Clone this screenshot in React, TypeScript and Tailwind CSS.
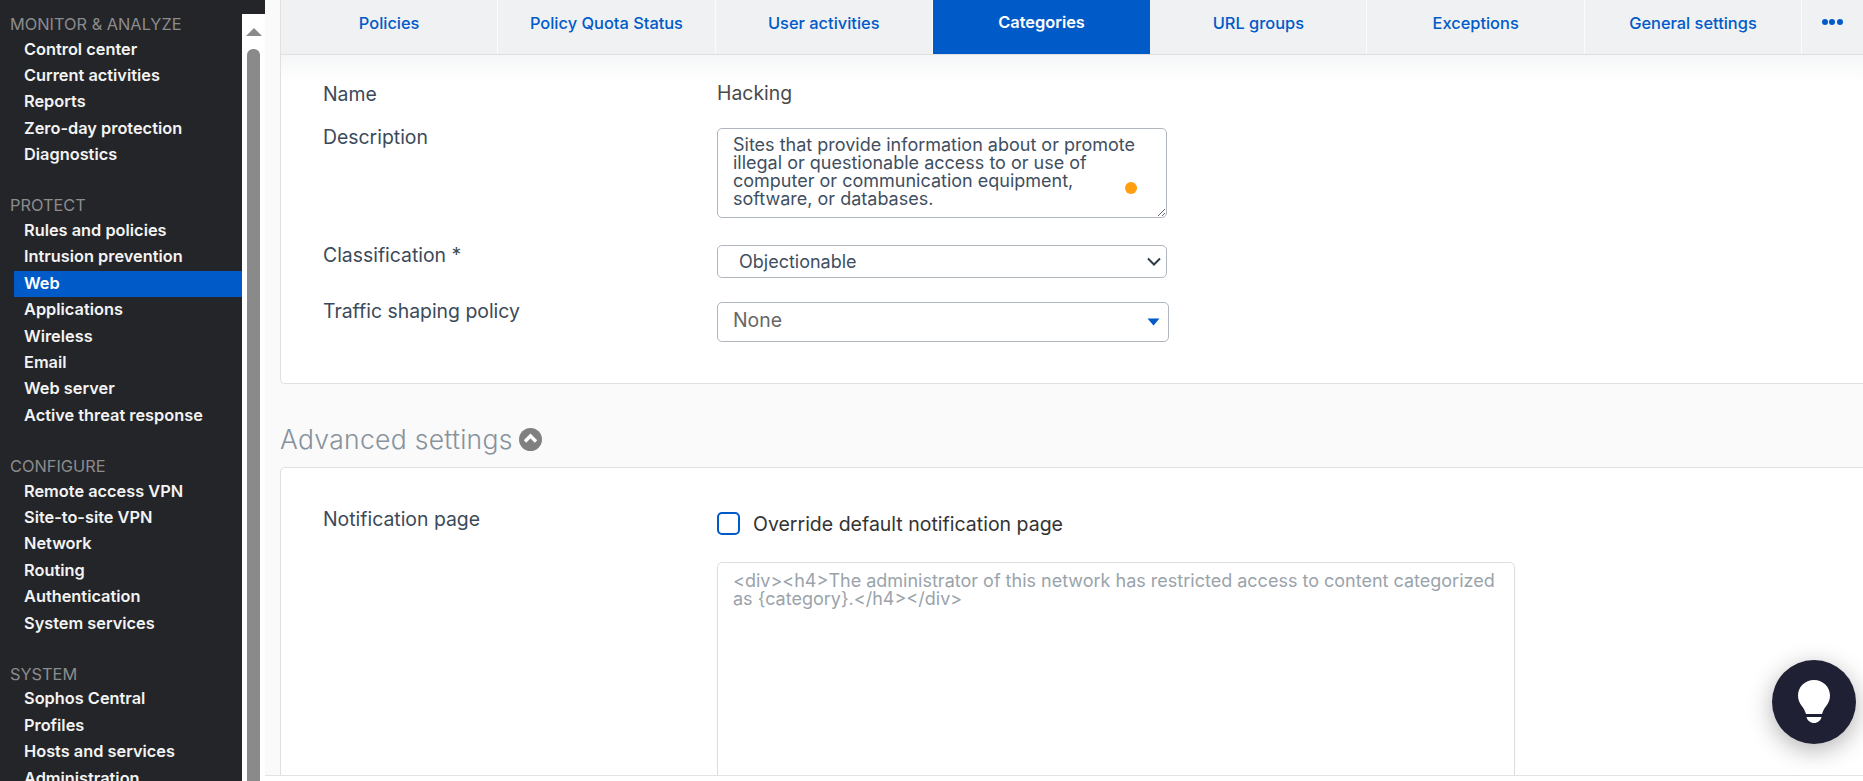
const SECTIONS = [
  { title: "MONITOR & ANALYZE", items: ["Control center", "Current activities", "Reports", "Zero-day protection", "Diagnostics"] },
  { title: "PROTECT", items: ["Rules and policies", "Intrusion prevention", "Web", "Applications", "Wireless", "Email", "Web server", "Active threat response"] },
  { title: "CONFIGURE", items: ["Remote access VPN", "Site-to-site VPN", "Network", "Routing", "Authentication", "System services"] },
  { title: "SYSTEM", items: ["Sophos Central", "Profiles", "Hosts and services", "Administration"] },
];

const TABS = ["Policies", "Policy Quota Status", "User activities", "Categories", "URL groups", "Exceptions", "General settings"];

const DESCRIPTION =
  "Sites that provide information about or promote illegal or questionable access to or use of computer or communication equipment, software, or databases.";

const NOTIFICATION = "<div><h4>The administrator of this network has restricted access to content categorized as {category}.</h4></div>";

function Sidebar() {
  return (
    <aside className="w-[265px] h-full shrink-0 flex bg-[#242528] overflow-hidden">
      <nav className="w-[242px] shrink-0 pt-[13px]">
        {SECTIONS.map((section) => (
          <div key={section.title} className="mb-[26px]">
            <h3 className="pl-[10px] h-[23.500px] leading-[23px] text-[16.35px] text-[#8b8c8e] font-normal whitespace-nowrap">{section.title}</h3>
            {section.items.map((item) => (
              <a
                key={item}
                href="#"
                className={`block ml-[14px] pl-[10px] h-[26.4px] leading-[25.500px] text-[16.35px] font-semibold whitespace-nowrap ${
                  item === "Web" ? "bg-[#005bc8] text-white" : "text-[#f3f3f3]"
                }`}
              >
                {item}
              </a>
            ))}
          </div>
        ))}
      </nav>
      {/* scrollbar */}
      <div className="w-[23px] mt-[14px] bg-white flex flex-col items-center">
        <div className="mt-[14px] w-0 h-0 border-x-[8px] border-x-transparent border-b-[8px] border-b-[#8a8a8a]" />
        <div className="mt-[13px] w-[13px] flex-1 rounded-t-[6px] bg-[#8a8a8a]" />
      </div>
    </aside>
  );
}

function Tabs() {
  return (
    <div className="flex h-[55px] shrink-0 ml-[15px] border-l border-b border-[#e0e0e0] bg-[#f0f1f3]">
      {TABS.map((tab) => (
        <a
          key={tab}
          href="#"
          className={`w-[217.3px] h-[54px] shrink-0 flex justify-center text-[16.4px] leading-[22px] font-medium ${
            tab === "Categories"
              ? "bg-[#005bc8] text-white pt-[11px] font-semibold"
              : "text-[#005bc8] pt-[12px] border-r border-white/70"
          }`}
        >
          {tab}
        </a>
      ))}
      <div className="flex-1 flex justify-center pt-[19px] gap-[1.500px] pr-[1px]">
        <span className="w-[6px] h-[6px] rounded-full bg-[#005bc8]" />
        <span className="w-[6px] h-[6px] rounded-full bg-[#005bc8]" />
        <span className="w-[6px] h-[6px] rounded-full bg-[#005bc8]" />
      </div>
    </div>
  );
}

function Label({ children, className = "" }: { children: React.ReactNode; className?: string }) {
  return <div className={`w-[394px] shrink-0 text-[19.4px] text-[#3b4a59] ${className}`}>{children}</div>;
}

function CategoryCard() {
  return (
    <section className="ml-[15px] h-[329px] pl-[42px] pt-[27px] bg-white border-l border-b border-[#e0e0e0] rounded-bl-[5px]">
      <div className="flex h-[46px]">
        <Label className="leading-[24px]">Name</Label>
        <div className="text-[19.4px] leading-[23px] text-[#4a4a4a]">Hacking</div>
      </div>
      <div className="flex h-[117px]">
        <Label className="leading-[19px]">Description</Label>
        <div className="relative">
          <textarea
            readOnly
            defaultValue={DESCRIPTION}
            className="block w-[450px] h-[90px] px-[15px] py-[7px] text-[18px] leading-[18px] text-[#3f4f5f] border border-[#b0b6bd] rounded-[5px] resize overflow-hidden outline-none"
          />
          <span className="absolute left-[408px] top-[54px] w-[12px] h-[12px] rounded-full bg-[#ff9f0f]" />
        </div>
      </div>
      <div className="flex h-[57px]">
        <Label className="leading-[20px]">Classification *</Label>
        <div className="relative w-[450px] h-[33px]">
          <select
            defaultValue="Objectionable"
            className="block w-full h-full px-[21px] appearance-none text-[18px] text-[#3f4f5f] bg-white border border-[#b0b6bd] rounded-[5px] outline-none"
          >
            <option>Objectionable</option>
          </select>
          <svg className="absolute left-[430px] top-[12px] pointer-events-none" width="14" height="9" viewBox="0 0 14 9">
            <path d="M1 1.500 7 7.500 13 1.500" fill="none" stroke="#2f3b47" strokeWidth="2" />
          </svg>
        </div>
      </div>
      <div className="flex">
        <Label className="leading-[19px]">Traffic shaping policy</Label>
        <div className="relative w-[452px] h-[40px] pl-[15px] border border-[#b0b6bd] rounded-[5px] text-[19.4px] leading-[35px] text-[#666]">
          None
          <svg className="absolute left-[429px] top-[15px]" width="13" height="8" viewBox="0 0 13 8">
            <path d="M0.5 0.5h12L6.5 7.5z" fill="#005bc8" />
          </svg>
        </div>
      </div>
    </section>
  );
}

function AdvancedCard() {
  return (
    <>
      <div className="ml-[15px] h-[83px] pt-[27px] flex items-center">
        <h2 className="text-[26.500px] leading-[44px] font-light text-[#87929c] tracking-[0.3px] whitespace-nowrap">Advanced settings</h2>
        <svg className="ml-[6px]" width="23" height="23" viewBox="0 0 23 23">
          <circle cx="11.5" cy="11.5" r="11.5" fill="#808080" />
          <path d="M6 13.5 11.5 8 17 13.5" fill="none" stroke="#fff" strokeWidth="3.4" />
        </svg>
      </div>
      <section className="ml-[15px] h-[400px] pl-[42px] pt-[44px] bg-white border-l border-t border-[#e0e0e0] rounded-tl-[5px]">
        <div className="flex h-[50px]">
          <Label className="leading-[15px]">Notification page</Label>
          <label className="flex items-start text-[19.5px] text-[#333]">
            <span className="w-[23px] h-[23px] mr-[13px] bg-white border-2 border-[#005bc8] rounded-[5px]" />
            <span className="leading-[24px] whitespace-nowrap">Override default notification page</span>
          </label>
        </div>
        <div className="ml-[394px] w-[798px] h-[300px] px-[15px] py-[9px] border border-[#dcdfe2] rounded-[5px] text-[18px] leading-[17.5px] text-[#9aa3ab]">
          {NOTIFICATION}
        </div>
      </section>
    </>
  );
}

export default function App() {
  return (
    <div className="relative flex w-[1863px] h-[781px] overflow-hidden bg-[#fafafa] font-['Inter',sans-serif]">
      <Sidebar />
      <main className="flex-1 min-w-0 flex flex-col">
        <Tabs />
        <div className="relative flex-1 min-h-0 overflow-hidden">
          <CategoryCard />
          <AdvancedCard />
          <div className="absolute left-[16px] right-0 top-0 h-[28px] bg-gradient-to-b from-[#f5f6f7] to-white/0" />
        </div>
        <div className="h-[6px] shrink-0 bg-white border-t border-[#e3e3e3]" />
      </main>
      {/* help button */}
      <button className="absolute left-[1772px] top-[660px] w-[84px] h-[84px] rounded-full bg-[#1f2033] shadow-[0_6px_24px_rgba(0,0,0,0.3)] flex items-center justify-center">
        <svg width="32" height="44" viewBox="0 0 32 44">
          <path d="M16 0C7 0 0 7 0 15.5c0 4 1.4 7.4 3.6 10.2 1.9 2.4 3.4 5 4.4 8.3h16c1-3.3 2.5-5.9 4.4-8.3 2.2-2.8 3.6-6.2 3.6-10.2C32 7 25 0 16 0z" fill="#fff" />
          <path d="M8.5 37h15c-.8 3.6-3.8 6-7.5 6s-6.700-2.400-7.500-6z" fill="#fff" />
        </svg>
      </button>
    </div>
  );
}
